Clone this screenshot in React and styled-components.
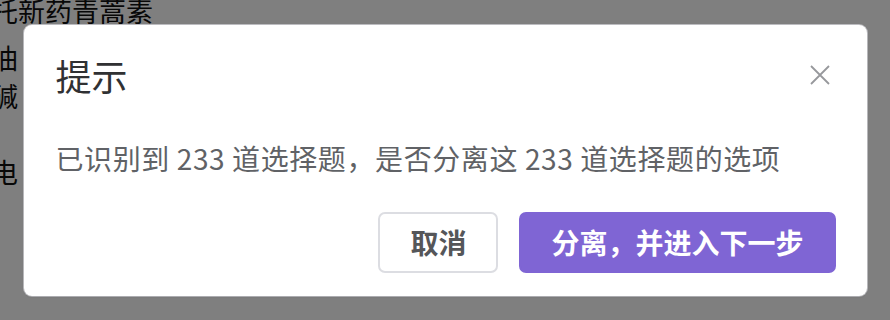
import React from 'react'
import styled, { createGlobalStyle } from 'styled-components'

const GlobalStyle = createGlobalStyle`
    html, body {
        margin: 0;
        padding: 0;
        width: 890px;
        height: 320px;
        overflow: hidden;
        background: #ffffff;
    }
    * {
        box-sizing: border-box;
    }
`

const Page = styled.div`
    position: relative;
    width: 890px;
    height: 320px;
    overflow: hidden;
    font-family: "Noto Sans CJK SC", "Noto Sans", sans-serif;
`

const Article = styled.div`
    margin-left: -9px;
    margin-top: -8px;
    font-size: 27px;
    line-height: 38px;
    color: #111111;
`

const Line = styled.p`
    margin: 0 0 ${ props => props.spaced ? '9px' : '0' };
    min-height: 38px;
    white-space: nowrap;
`

const Overlay = styled.div`
    position: absolute;
    inset: 0;
    background: rgba(0, 0, 0, 0.5);
    display: flex;
    align-items: center;
    justify-content: center;
`

const Dialog = styled.div`
    width: 843px;
    background: #ffffff;
    border-radius: 8px;
    box-shadow: 0 1px 2px rgba(0, 0, 0, 0.12), 0 0 0 1px rgba(230, 230, 236, 0.6);
    display: flex;
    flex-direction: column;
`

const Header = styled.div`
    display: flex;
    align-items: center;
    justify-content: space-between;
    padding: 28px 37px 0 32px;
`

const Title = styled.h2`
    margin: 0;
    font-size: 36px;
    line-height: 44px;
    font-weight: 400;
    color: #303133;
`

const CloseButton = styled.button`
    border: none;
    background: none;
    padding: 0;
    width: 20px;
    height: 20px;
    display: flex;
    cursor: pointer;
`

const Body = styled.div`
    padding: 41px 32px 0;
    font-size: 28px;
    line-height: 40px;
    letter-spacing: 0.6px;
    color: #606266;
`

const Footer = styled.div`
    display: flex;
    justify-content: flex-end;
    gap: 21px;
    padding: 34px 31px 23px;
`

const Button = styled.button`
    height: 61px;
    padding: 0 30px;
    border-radius: 7px;
    font-family: inherit;
    font-size: 28px;
    font-weight: 700;
    border: 2px solid ${ props => props.primary ? '#7f65d4' : '#dcdde2' };
    background: ${ props => props.primary ? '#7f65d4' : '#ffffff' };
    color: ${ props => props.primary ? '#ffffff' : '#555659' };
    cursor: pointer;
`

const CloseIcon = () => (
    <svg width="20" height="20" viewBox="0 0 20 20">
        <path d="M1 1 L19 19 M19 1 L1 19" stroke="#97989c" strokeWidth="1.8" fill="none" />
    </svg>
)

export default function App() {
    return (
        <Page>
            <GlobalStyle />
            <Article>
                <Line spaced>托新药青蒿素</Line>
                <Line>油</Line>
                <Line>碱</Line>
                <Line />
                <Line>电</Line>
            </Article>
            <Overlay>
                <Dialog>
                    <Header>
                        <Title>提示</Title>
                        <CloseButton aria-label="关闭"><CloseIcon /></CloseButton>
                    </Header>
                    <Body>已识别到 233 道选择题，是否分离这 233 道选择题的选项</Body>
                    <Footer>
                        <Button>取消</Button>
                        <Button primary>分离，并进入下一步</Button>
                    </Footer>
                </Dialog>
            </Overlay>
        </Page>
    )
}
